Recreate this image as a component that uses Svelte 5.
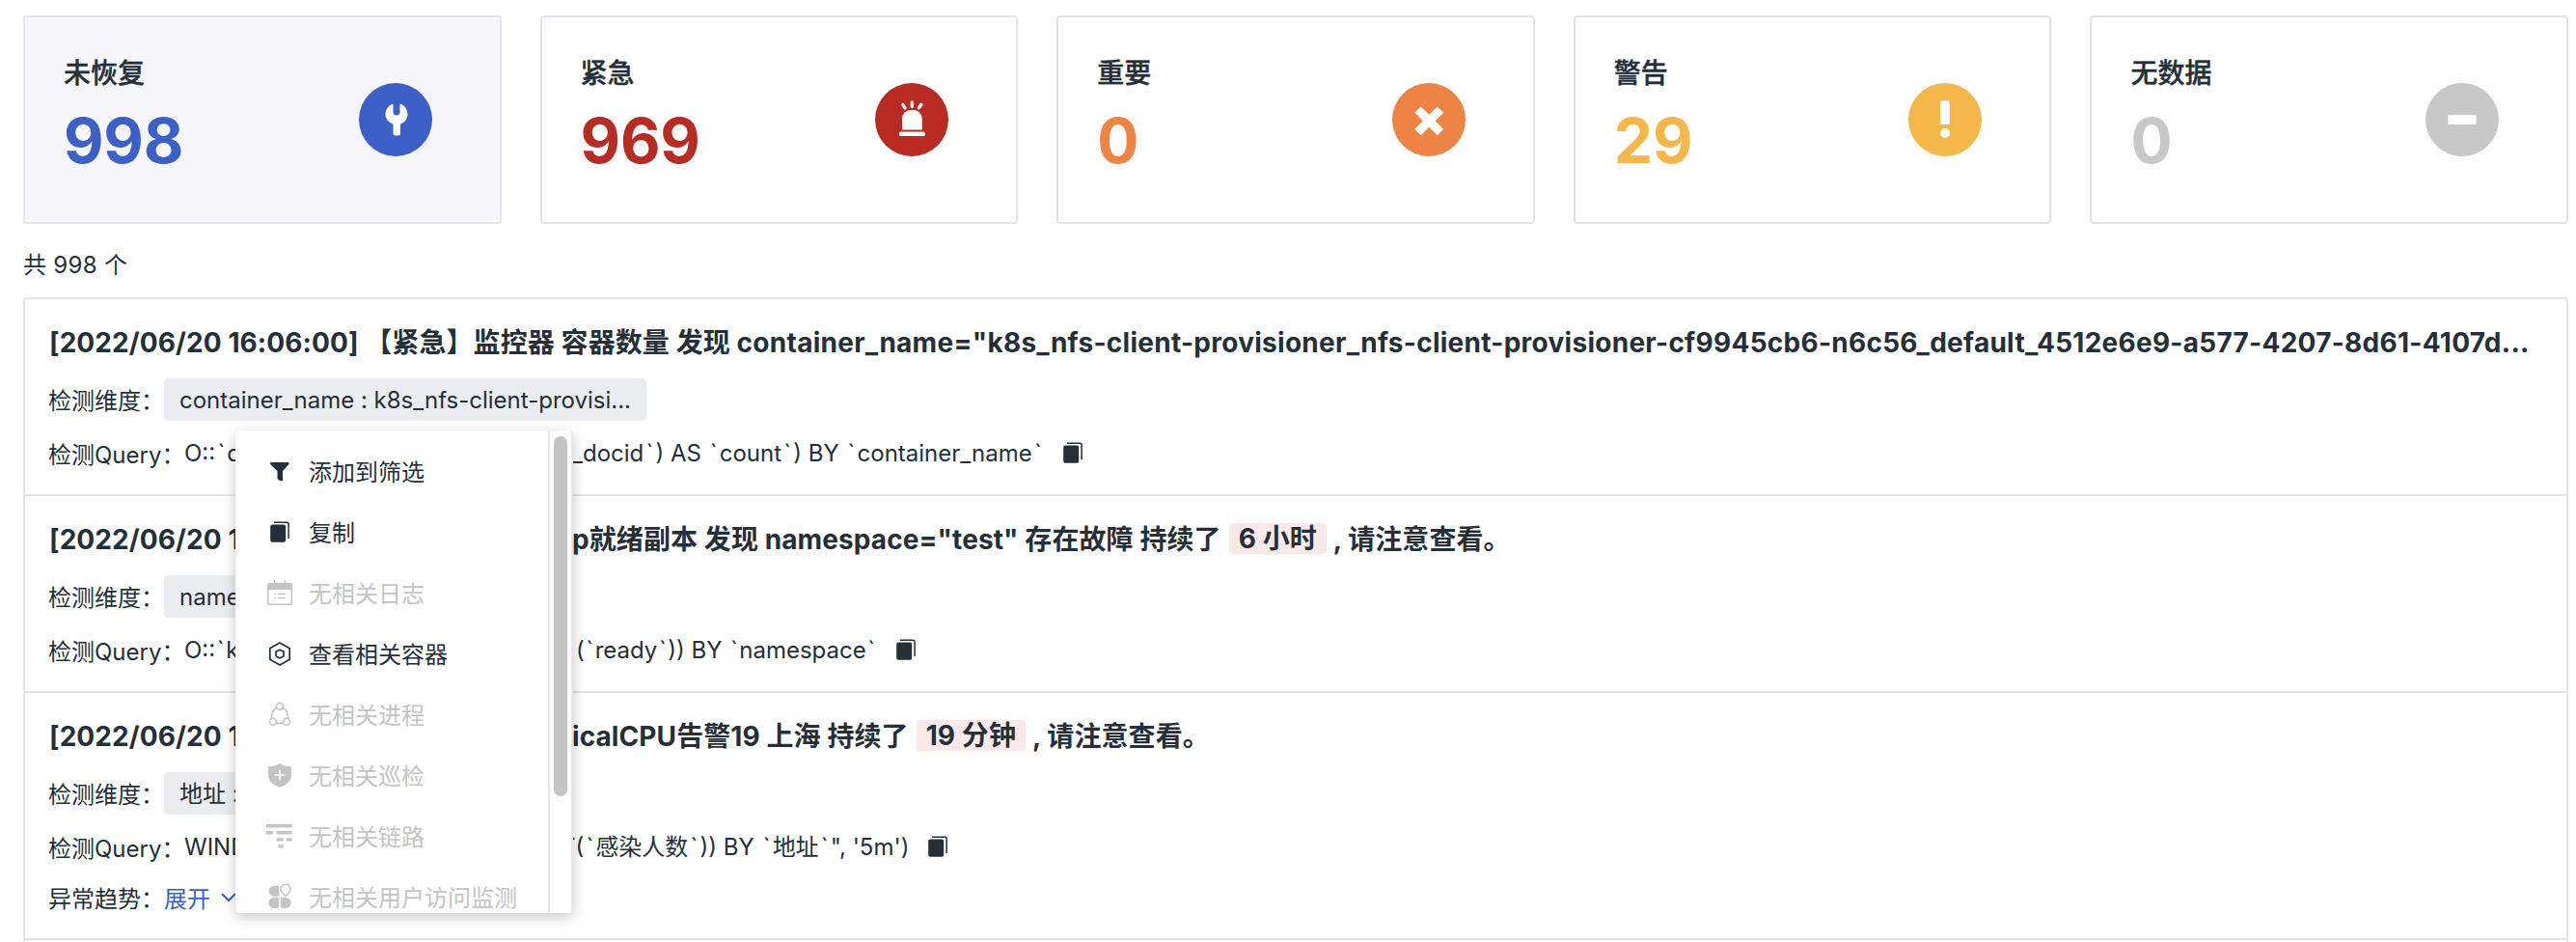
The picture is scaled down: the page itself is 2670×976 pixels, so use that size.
<script>
  const cards = [
    { label: '未恢复', value: 998, color: '#3c60c8', icon: 'wrench', active: true },
    { label: '紧急', value: 969, color: '#b82b22', icon: 'alarm' },
    { label: '重要', value: 0, color: '#ee8346', icon: 'cross' },
    { label: '警告', value: 29, color: '#f5b74a', icon: 'bang' },
    { label: '无数据', value: 0, color: '#c8c8c8', icon: 'minus' }
  ];
  const events = [
    {
      title: ['[2022/06/20 16:06:00] 【紧急】监控器 容器数量 发现 ', 'container_name="k8s_nfs-client-provisioner_nfs-client-provisioner-cf9945cb6-n6c56_default_4512e6e9-a577-4207-8d61-4107d...'],
      tag: 'container_name : k8s_nfs-client-provisi...',
      query: ['O::`d', '_docid`) AS `count`) BY `container_name`'],
      qw: 402
    },
    {
      title: ['[2022/06/20 1', 'p就绪副本 发现 namespace="test" 存在故障 持续了'],
      duration: '6 小时',
      tag: 'name',
      query: ['O::`k', '(`ready`)) BY `namespace`'],
      qw: 406,
      tight: true
    },
    {
      title: ['[2022/06/20 1', 'icalCPU告警19 上海 持续了'],
      duration: '19 分钟',
      tag: '地址 :',
      query: ['WIND', 'T(`感染人数`)) BY `地址`", \'5m\')'],
      qw: 390,
      trend: true
    }
  ];
  const menu = [
    { text: '添加到筛选', icon: 'filter' },
    { text: '复制', icon: 'copy' },
    { text: '无相关日志', icon: 'log', off: true },
    { text: '查看相关容器', icon: 'hex' },
    { text: '无相关进程', icon: 'process', off: true },
    { text: '无相关巡检', icon: 'shield', off: true },
    { text: '无相关链路', icon: 'trace', off: true },
    { text: '无相关用户访问监测', icon: 'rum', off: true }
  ];
</script>

{#snippet copyIcon()}
  <svg class="ico" viewBox="0 0 28 28" fill="currentColor">
    <rect x="4.200" y="5.500" width="16" height="18.200" rx="2" />
    <path d="M8 3.300h13.300q1.800 0 1.800 1.800V20" fill="none" stroke="currentColor" stroke-width="1.500" />
  </svg>
{/snippet}

{#snippet code(text)}
  <span class="code">{#each text.split('`') as part, i}{#if i > 0}<span class="tick">`</span>{/if}{part}{/each}</span>
{/snippet}

<main>
  <section class="cards">
    {#each cards as c}
      <article class="card" class:active={c.active} style="color: {c.color}">
        <div>
          <h3>{c.label}</h3>
          <strong>{c.value}</strong>
        </div>
        <svg class="badge" viewBox="0 0 76 76">
          <circle cx="38" cy="38" r="38" fill="currentColor" />
          {#if c.icon === 'wrench'}
            <path fill="#fff" d="M35.500 21.500v8.500a3.500 3.500 0 0 0 7 0v-8.500c5 1.500 8 6 8 11 0 4.500-2.500 8-7.500 10V52q0 2.500-2.500 2.500h-2.500q-2.500 0-2.500-2.500v-9.500c-5-2-8-5.500-8-10 0-5 3-9.500 8-11z" />
          {:else if c.icon === 'alarm'}
            <g fill="#fff">
              <path d="M28 48.500V38.200q0-10.500 10.400-10.500t10.400 10.500v10.300z" />
              <rect x="24.700" y="50.500" width="27.400" height="4.600" rx="2.200" />
              <path d="M38.300 20v4.300M28.800 22.300l2.200 3.500M47.900 22.300l-2.400 3.500" stroke="#fff" stroke-width="3.300" stroke-linecap="round" />
            </g>
          {:else if c.icon === 'cross'}
            <path d="M26.500 27.500l23.500 23.500M50 27.500l-23.500 23.500" stroke="#fff" stroke-width="9" />
          {:else if c.icon === 'bang'}
            <rect x="33.300" y="18.500" width="9.500" height="24.500" fill="#fff" />
            <circle cx="38" cy="52" r="5" fill="#fff" />
          {:else}
            <rect x="23.500" y="33" width="29" height="10" fill="#fff" />
          {/if}
        </svg>
      </article>
    {/each}
  </section>

  <p class="total">共 998 个</p>

  <section class="list">
    {#each events as e}
      <article class="event" class:tall={e.trend}>
        {#if e.duration}
          <h2><span class="head">{e.title[0]}</span><span>{e.title[1]}</span><mark>{e.duration}</mark><span>, 请注意查看。</span></h2>
        {:else}
          <h2><span>{e.title[0]}</span><span class="ids">{e.title[1]}</span></h2>
        {/if}
        <div class="row dim"><span class="key">检测维度：</span><span class="tag" class:under={e.duration}>{e.tag}</span></div>
        <div class="row query" class:tight={e.tight}>
          <span class="qkey">检测Query：</span><span class="clip" style="width: {e.qw}px">{@render code(e.query[0])}</span>{@render code(e.query[1])}
          {@render copyIcon()}
        </div>
        {#if e.trend}
          <div class="row trend">
            <span class="key">异常趋势：</span><span class="link">展开</span>
            <svg width="18" height="12" viewBox="0 0 18 12" fill="none" stroke="#3c60c8" stroke-width="2"><path d="M2 2l7 7 7-7" /></svg>
          </div>
        {/if}
      </article>
    {/each}
  </section>

  <aside class="menu">
    <ul>
      {#each menu as m}
        <li class:off={m.off}>
          {#if m.icon === 'copy'}
            {@render copyIcon()}
          {:else}
            <svg class="ico" viewBox="0 0 28 28" fill="currentColor">
              {#if m.icon === 'filter'}
                <path d="M4.300 4h19q.8 1.300-.3 2.500L17 13v10.500q-3 0-5.500-2.500v-8L4.700 6.500Q3.500 5.300 4.300 4z" />
              {:else if m.icon === 'log'}
                <path d="M2 3h24v7H2zM8 0h1.300v4H8zM18.500 0h1.300v4h-1.300z" />
                <rect x="1.700" y="3.700" width="24.600" height="21.600" rx="1.500" fill="none" stroke="currentColor" stroke-width="1.400" />
                <path d="M8.500 14.500h1.500M12 14.500h8M8.500 18.500h1.500M12 18.500h8" stroke="currentColor" stroke-width="1.400" />
              {:else if m.icon === 'hex'}
                <g fill="none" stroke="currentColor" stroke-width="1.700" stroke-linejoin="round">
                  <path d="M14 2l10.200 5.800v11.500L14 25.100 3.800 19.300V7.800z" />
                  <path d="M14 9.200l4 2.100v4.500l-4 2.100-4-2.100v-4.500z" />
                </g>
              {:else if m.icon === 'process'}
                <g fill="none" stroke="currentColor" stroke-width="1.500">
                  <circle cx="14" cy="4.700" r="3.500" />
                  <circle cx="7" cy="20.700" r="3.500" />
                  <circle cx="21" cy="20.700" r="3.500" />
                  <path d="M10.700 6Q5.500 9.200 5.300 17.500M17.300 6q5.200 3.200 5.400 11.500M10.300 22q3.700 1 7.400 0" />
                </g>
              {:else if m.icon === 'shield'}
                <path d="M14 1c3 2.300 7 3 11.800 3.200V14c0 5.500-5 9.500-11.800 11.800C7.200 23.500 2.200 19.500 2.200 14V4.200C7 4 11 3.300 14 1z" />
                <path d="M14 7.500v11M8.500 13h11" stroke="#fff" stroke-width="1.500" />
              {:else if m.icon === 'trace'}
                <path d="M0 1h26.500v3.500H0zM0 8h7v3.500H0zM10.500 8h16v3.500h-16zM10.500 15.200h7v3.300h-7zM21 15.200h5.500v3.300H21zM12.500 22.200h5.300v3.300h-5.300z" />
              {:else}
                <path d="M8 1.800h3q2.300 0 2.300 2.300v8.700H8A5.500 5.500 0 0 1 8 1.800z" />
                <path d="M8 14h5.300v8.700q0 2.300-2.300 2.300H8A5.500 5.500 0 0 1 8 14z" />
                <path d="M14.800 14h5.400a5.500 5.500 0 0 1 0 11H17q-2.200 0-2.200-2.300z" />
                <path d="M20 12.500l-3.600-3.600a5.100 5.100 0 1 1 7.200 0z" fill="none" stroke="currentColor" stroke-width="1.400" />
              {/if}
            </svg>
          {/if}
          <span>{m.text}</span>
        </li>
      {/each}
    </ul>
    <div class="track"><div class="thumb"></div></div>
  </aside>
</main>

<style>
  :global(body) {
    background: #fff;
  }
  main {
    position: relative;
    box-sizing: border-box;
    width: 2670px;
    height: 976px;
    padding: 16px 8px 0 24px;
    overflow: hidden;
    font-family: Inter, 'Noto Sans CJK SC', sans-serif;
    font-size: 24px;
    color: #252f38;
  }
  h2, h3, p, ul {
    margin: 0;
    padding: 0;
  }
  .cards {
    display: grid;
    grid-template-columns: repeat(5, 1fr);
    gap: 40px;
  }
  .card {
    box-sizing: border-box;
    height: 216px;
    display: flex;
    justify-content: space-between;
    align-items: center;
    padding: 0 70px 0 40px;
    border: 2px solid #e3e3ea;
    border-radius: 4px;
  }
  .card > div {
    height: 136px;
  }
  .active {
    background: #f6f6fb;
  }
  h3 {
    font-size: 28px;
    font-weight: 500;
    line-height: 40px;
    color: #252f38;
    -webkit-text-stroke: 0.4px #252f38;
  }
  strong {
    display: block;
    margin-top: 18px;
    font-size: 64px;
    font-weight: 700;
    line-height: 64px;
    letter-spacing: -0.2px;
  }
  .badge {
    width: 76px;
    height: 76px;
  }
  .total {
    height: 76px;
    line-height: 86px;
    letter-spacing: 0.3px;
  }
  .list {
    border: 2px solid #e3e3ea;
    border-radius: 4px 4px 0 0;
    height: 700px;
  }
  .event {
    box-sizing: border-box;
    height: 204px;
    padding: 22px 25px 0 25px;
    border-bottom: 2px solid #e3e3ea;
  }
  .tall {
    height: 256px;
  }
  h2 {
    display: flex;
    height: 46px;
    font-size: 28px;
    font-weight: 700;
    line-height: 46px;
    letter-spacing: 0.09px;
    white-space: pre;
  }
  .ids {
    letter-spacing: 0.27px;
  }
  .head {
    flex: none;
    width: 542px;
  }
  mark {
    height: 32px;
    line-height: 32px;
    margin: 6px 7px 0 8px;
    padding: 0 10px;
    border-radius: 4px;
    background: #fbe9e9;
    color: inherit;
  }
  .row {
    display: flex;
    align-items: center;
    white-space: nowrap;
  }
  .dim {
    height: 44px;
    margin-top: 14px;
  }
  .key,
  .qkey {
    margin-left: -1px;
    padding-bottom: 2px;
  }
  .key {
    width: 120px;
  }
  .tag {
    padding: 0 16px;
    line-height: 45px;
    height: 44px;
    border-radius: 4px;
    background: #ebecf0;
  }
  .under {
    min-width: 80px;
  }
  .query {
    height: 44px;
    margin-top: 12px;
  }
  .qkey {
    width: 141px;
  }
  .clip {
    flex: none;
  }
  .clip,
  .code {
    line-height: 44px;
  }
  .tick {
    padding: 0 2.2px;
  }
  .tight .tick {
    padding: 0 1.6px;
  }
  .query .ico {
    margin-left: 16px;
  }
  .ico {
    flex: none;
    width: 28px;
    height: 28px;
  }
  .trend {
    height: 40px;
    margin-top: 10px;
  }
  .link {
    padding-bottom: 2px;
    color: #3c60c8;
    margin-right: 10px;
  }
  .menu {
    position: absolute;
    left: 244px;
    top: 446px;
    box-sizing: border-box;
    width: 350px;
    height: 500px;
    display: flex;
    overflow: hidden;
    border-right: 2px solid #e6e6ea;
    border-radius: 4px;
    background: #fff;
    box-shadow: 0 4px 14px rgba(0, 0, 0, 0.22);
  }
  ul {
    flex: 1;
    padding-top: 11px;
    list-style: none;
  }
  li {
    display: flex;
    align-items: center;
    gap: 16px;
    height: 63px;
    padding-left: 32px;
    white-space: nowrap;
  }
  li span {
    padding-bottom: 2px;
  }
  .off {
    color: #c4c4c4;
  }
  .track {
    box-sizing: border-box;
    width: 24px;
    padding: 6px 4px 0;
    border-left: 2px solid #e6e6ea;
  }
  .thumb {
    width: 14px;
    height: 373px;
    border-radius: 7px;
    background: #c4c4c4;
  }
</style>
